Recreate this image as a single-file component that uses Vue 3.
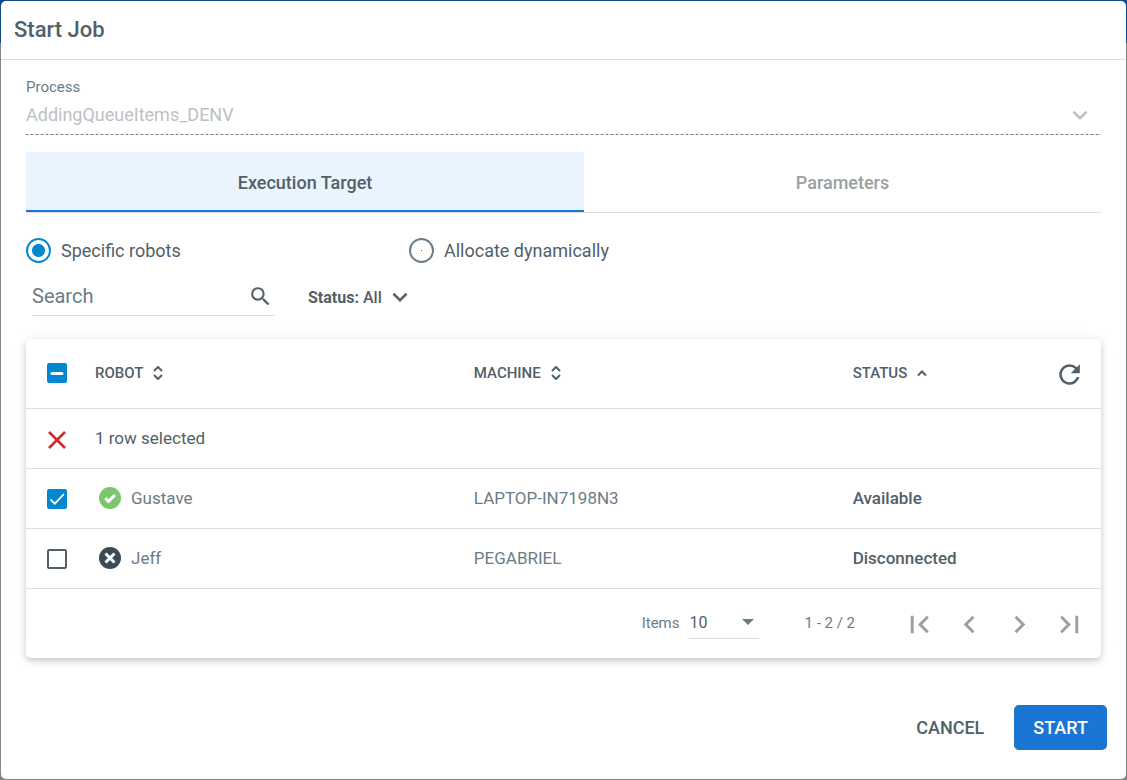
<script setup>
import { ref, computed } from 'vue'

const process = ref('AddingQueueItems_DENV')
const tab = ref('target')
const tabs = [
  { id: 'target', label: 'Execution Target' },
  { id: 'params', label: 'Parameters' },
]
const mode = ref('specific')
const modes = [
  { id: 'specific', label: 'Specific robots' },
  { id: 'dynamic', label: 'Allocate dynamically' },
]
const search = ref('')
const status = ref('All')
const pageSize = ref('10')
const robots = ref([
  { name: 'Gustave', machine: 'LAPTOP-IN7198N3', status: 'Available', selected: true },
  { name: 'Jeff', machine: 'PEGABRIEL', status: 'Disconnected', selected: false },
])
const columns = [
  { label: 'ROBOT', sort: 'none' },
  { label: 'MACHINE', sort: 'none' },
  { label: 'STATUS', sort: 'ascending' },
]
const selectedCount = computed(() => robots.value.filter((r) => r.selected).length)
const allSelected = computed(() => selectedCount.value === robots.value.length)
const someSelected = computed(() => selectedCount.value > 0 && !allSelected.value)
function setAll(value) {
  robots.value.forEach((r) => (r.selected = value))
}
const pagers = [
  { label: 'First page', d: 'M18.41 16.59L13.82 12l4.59-4.59L17 6l-6 6 6 6zM6 6h2v12H6z' },
  { label: 'Previous page', d: 'M15.41 7.41L14 6l-6 6 6 6 1.41-1.41L10.83 12z' },
  { label: 'Next page', d: 'M10 6L8.59 7.41 13.17 12l-4.58 4.59L10 18l6-6z' },
  { label: 'Last page', d: 'M5.59 7.41L10.18 12l-4.59 4.59L7 18l6-6-6-6zM16 6h2v12h-2z' },
]
</script>

<template>
  <div class="backdrop">
    <main class="dialog" role="dialog" aria-labelledby="dialog-title">
      <header class="dialog-header">
        <h1 id="dialog-title">Start Job</h1>
      </header>

      <div class="content">
        <div class="process">
          <label for="process">Process</label>
          <div class="stack process-field">
            <select id="process" v-model="process" disabled>
              <option>AddingQueueItems_DENV</option>
            </select>
            <svg class="chevron" viewBox="0 0 24 24" aria-hidden="true"><path d="M16.59 8.59L12 13.17 7.41 8.59 6 10l6 6 6-6z" /></svg>
          </div>
        </div>

        <div class="tabs" role="tablist">
          <button v-for="t in tabs" :key="t.id" type="button" role="tab" class="tab" :class="{ active: tab === t.id }" :aria-selected="tab === t.id" @click="tab = t.id">{{ t.label }}</button>
        </div>

        <div class="modes">
          <label v-for="m in modes" :key="m.id" class="mode">
            <input v-model="mode" type="radio" name="mode" :value="m.id" />
            <span>{{ m.label }}</span>
          </label>
        </div>

        <div class="filters">
          <div class="search">
            <input v-model="search" type="text" placeholder="Search" aria-label="Search" />
            <svg viewBox="0 0 24 24" aria-hidden="true"><path d="M15.5 14h-.79l-.28-.27A6.47 6.47 0 0 0 16 9.5 6.5 6.5 0 1 0 9.5 16c1.61 0 3.09-.59 4.23-1.57l.27.28v.79l5 4.99L20.49 19zm-6 0a4.5 4.5 0 1 1 0-9 4.5 4.5 0 0 1 0 9z" /></svg>
          </div>
          <div class="status-filter">
            <label for="status">Status:</label>
            <div class="stack">
              <select id="status" v-model="status">
                <option>All</option>
              </select>
              <svg class="chevron" viewBox="0 0 24 24" aria-hidden="true"><path d="M16.59 8.59L12 13.17 7.41 8.59 6 10l6 6 6-6z" /></svg>
            </div>
          </div>
        </div>

        <section class="card">
          <table>
            <colgroup>
              <col class="col-check" />
              <col class="col-data" />
              <col class="col-data" />
              <col />
              <col class="col-action" />
            </colgroup>
            <thead>
              <tr>
                <th>
                  <span class="stack check">
                    <input type="checkbox" aria-label="Select all robots" :checked="allSelected" :indeterminate="someSelected" @change="setAll($event.target.checked)" />
                    <svg v-if="someSelected" viewBox="0 0 20 20" aria-hidden="true"><path d="M5 10.5h10" fill="none" stroke="#fff" stroke-width="3" stroke-linecap="round" /></svg>
                    <svg v-else-if="allSelected" viewBox="0 0 20 20" aria-hidden="true"><path d="M3.5 10.5l4.3 4.2L17 5" fill="none" stroke="#fff" stroke-width="1.8" /></svg>
                  </span>
                </th>
                <th v-for="c in columns" :key="c.label" :aria-sort="c.sort">
                  <button type="button" class="sort">
                    {{ c.label }}
                    <svg viewBox="0 0 10 14" aria-hidden="true">
                      <path v-if="c.sort === 'none'" d="M1 5l4-4 4 4M1 9l4 4 4-4" />
                      <path v-else d="M1 9.5l4-4 4 4" />
                    </svg>
                  </button>
                </th>
                <th class="action">
                  <button type="button" class="refresh" aria-label="Refresh">
                    <svg viewBox="0 0 24 24" aria-hidden="true"><path d="M17.65 6.35A7.96 7.96 0 0 0 12 4a8 8 0 1 0 7.73 10h-2.08A6 6 0 1 1 12 6c1.66 0 3.14.69 4.22 1.78L13 11h7V4z" /></svg>
                  </button>
                </th>
              </tr>
            </thead>
            <tbody>
              <tr>
                <td>
                  <button type="button" class="clear" aria-label="Clear selection" @click="setAll(false)">
                    <svg viewBox="0 0 20 20" aria-hidden="true"><path d="M2 3l16 16M18 3L2 19" fill="none" stroke="#c92a2a" stroke-width="2.6" /></svg>
                  </button>
                </td>
                <td colspan="4" class="selected-info">{{ selectedCount }} row selected</td>
              </tr>
              <tr v-for="r in robots" :key="r.name">
                <td>
                  <span class="stack check">
                    <input v-model="r.selected" type="checkbox" :aria-label="'Select ' + r.name" />
                    <svg v-if="r.selected" viewBox="0 0 20 20" aria-hidden="true"><path d="M3.5 10.5l4.3 4.2L17 5" fill="none" stroke="#fff" stroke-width="1.8" /></svg>
                  </span>
                </td>
                <td>
                  <span class="robot">
                    <svg viewBox="0 0 22 22" aria-hidden="true">
                      <template v-if="r.status === 'Available'">
                        <circle cx="11" cy="11" r="11" fill="#7cc76e" />
                        <path d="M6.3 11.2l3.2 3.1L16 8" fill="none" stroke="#fff" stroke-width="3" />
                      </template>
                      <template v-else>
                        <circle cx="11" cy="11" r="11" fill="#3b4b55" />
                        <path d="M6.5 6.5l9 9M15.5 6.5l-9 9" fill="none" stroke="#fff" stroke-width="3" />
                      </template>
                    </svg>
                    {{ r.name }}
                  </span>
                </td>
                <td>{{ r.machine }}</td>
                <td colspan="2" class="state">{{ r.status }}</td>
              </tr>
            </tbody>
          </table>

          <footer class="pagination">
            <label for="page-size">Items</label>
            <div class="stack page-size">
              <select id="page-size" v-model="pageSize">
                <option>10</option>
              </select>
              <svg viewBox="0 0 12 6" aria-hidden="true"><path d="M0 0h12L6 6z" /></svg>
            </div>
            <span class="range">1 - 2 / 2</span>
            <button v-for="p in pagers" :key="p.label" type="button" class="pager" :aria-label="p.label">
              <svg viewBox="0 0 24 24" aria-hidden="true"><path :d="p.d" /></svg>
            </button>
          </footer>
        </section>
      </div>

      <div class="actions">
        <button type="button" class="btn">CANCEL</button>
        <button type="button" class="btn primary">START</button>
      </div>
    </main>
  </div>
</template>

<style>
body {
  margin: 0;
}
</style>

<style scoped>
.backdrop,
.backdrop * {
  box-sizing: border-box;
}
.backdrop {
  min-height: 100vh;
  padding: 1px;
  display: flex;
  background: linear-gradient(#104a87 43px, #858585 43px);
  font-family: Roboto, "Liberation Sans", sans-serif;
  font-size: 17px;
  color: #526069;
}
button,
input,
select {
  font: inherit;
  color: inherit;
  margin: 0;
  padding: 0;
  border: 0;
  background: none;
  appearance: none;
  outline-offset: 2px;
}
button,
select {
  cursor: pointer;
}
svg {
  display: block;
  fill: currentColor;
}
.stack {
  display: grid;
  align-items: center;
}
.stack > * {
  grid-area: 1 / 1;
}
.stack > svg {
  justify-self: end;
  pointer-events: none;
}
.chevron {
  width: 30px;
  height: 30px;
}
.dialog {
  flex: 1;
  min-width: 0;
  display: flex;
  flex-direction: column;
  background: #fff;
  border-radius: 5px;
}
.dialog-header {
  padding: 14px 13px;
  border-bottom: 1px solid #ddd;
}
h1 {
  margin: 0;
  font-size: 22px;
  line-height: 30px;
  font-weight: 500;
}
.content {
  padding: 17px 25px 0;
}
.process label {
  display: block;
  font-size: 15px;
  line-height: 20px;
  color: #6b7c86;
}
.process-field {
  height: 38px;
  padding: 0 6px 3px 0;
  background: repeating-linear-gradient(90deg, #777 0 2px, #d6d6d6 2px 5px) bottom / 100% 1px no-repeat;
}
.process select {
  height: 35px;
  font-size: 18px;
  color: #bcc1c4;
  opacity: 1;
}
.process .chevron {
  color: #bcc1c4;
}
.tabs {
  display: flex;
  margin-top: 17px;
  border-bottom: 1px solid #ddd;
}
.tab {
  flex: 1 1 auto;
  height: 60px;
  font-size: 18px;
  font-weight: 500;
  color: #9b9fa2;
}
.tab.active {
  color: #526069;
  background: #e9f4fe;
  border-top: 2px solid transparent;
  border-bottom: 2px solid #1976d2;
}
.modes {
  display: grid;
  grid-template-columns: 383px 1fr;
  margin-top: 25px;
}
.mode {
  display: flex;
  align-items: center;
  gap: 10px;
  font-size: 18px;
  line-height: 25px;
}
.mode input {
  width: 25px;
  height: 25px;
  border: 2px solid #6b7c86;
  border-radius: 50%;
  background: linear-gradient(#526069, #526069) center / 1px 1px no-repeat;
}
.mode input:checked {
  border-color: #0288d1;
  background: radial-gradient(circle, #0288d1 6px, transparent 7px);
}
.filters {
  display: flex;
  gap: 33px;
  margin: 15px 6px 0;
}
.search {
  width: 243px;
  height: 38px;
  padding-right: 2px;
  display: flex;
  align-items: center;
  border-bottom: 1px solid #ddd;
}
.search input {
  flex: 1;
  min-width: 0;
  padding-bottom: 2px;
  font-size: 20px;
}
.search input::placeholder {
  color: #6b7c86;
  opacity: 1;
}
.search svg {
  width: 25px;
  height: 25px;
}
.status-filter {
  display: flex;
  align-items: center;
  gap: 4px;
  font-size: 16px;
  font-weight: 500;
}
.status-filter label {
  font-weight: 700;
}
.status-filter select {
  padding-right: 33px;
}
.card {
  margin-top: 23px;
  border-radius: 5px;
  background: #fff;
  box-shadow: 0 3px 6px rgba(0, 0, 0, 0.18), 0 0 16px rgba(0, 0, 0, 0.06);
}
table {
  width: 100%;
  table-layout: fixed;
  border-collapse: separate;
  border-spacing: 0;
}
.col-check {
  width: 69px;
}
.col-data {
  width: 35.24%;
}
.col-action {
  width: 62px;
}
th,
td {
  height: 60px;
  padding: 0 0 2px;
  text-align: left;
  vertical-align: middle;
  color: #6b7c86;
  border-bottom: 1px solid #ddd;
}
th {
  height: 70px;
}
th:first-child {
  padding-left: 21px;
}
td:first-child {
  padding: 0 0 0 21px;
}
th.action {
  padding: 2px 0 0;
}
.selected-info {
  color: #526069;
}
.state {
  color: #526069;
  font-weight: 500;
}
.check {
  width: 20px;
}
.check input {
  width: 20px;
  height: 20px;
  border: 2px solid #526069;
  border-radius: 2px;
}
.check input:checked,
.check input:indeterminate {
  border-color: #0288d1;
  background: #0288d1;
}
.check svg {
  width: 20px;
  height: 20px;
}
.sort {
  display: flex;
  align-items: center;
  gap: 10px;
  font-size: 15px;
  font-weight: 500;
  color: #526069;
}
.sort svg {
  width: 10px;
  height: 14px;
  fill: none;
  stroke: currentColor;
  stroke-width: 2;
}
.refresh {
  display: block;
  margin-left: 15px;
  color: #526069;
}
.refresh svg {
  width: 31px;
  height: 31px;
}
.clear {
  display: block;
}
.clear svg {
  width: 20px;
  height: 20px;
}
.robot {
  display: flex;
  align-items: center;
  gap: 10px;
  padding-left: 4px;
}
.robot svg {
  width: 22px;
  height: 22px;
}
.pagination {
  display: flex;
  justify-content: flex-end;
  align-items: center;
  height: 69px;
  padding: 0 7px 2px 0;
  font-size: 15px;
  color: #6b7c86;
}
.page-size {
  width: 70px;
  height: 32px;
  margin-left: 10px;
  padding-right: 5px;
  border-bottom: 1px solid #ddd;
}
.page-size select {
  font-size: 16px;
  color: #526069;
}
.page-size svg {
  width: 12px;
  height: 6px;
}
.range {
  margin: 0 39px 0 45px;
}
.pager {
  display: grid;
  place-items: center;
  width: 50px;
  height: 50px;
  padding-top: 4px;
  color: #9e9e9e;
}
.pager svg {
  width: 35px;
  height: 35px;
}
.actions {
  display: flex;
  justify-content: flex-end;
  gap: 11px;
  margin-top: auto;
  padding: 46px 19px 29px;
}
.btn {
  height: 45px;
  padding: 0 19px;
  border-radius: 5px;
  font-size: 18px;
  font-weight: 500;
}
.primary {
  color: #fff;
  background: #1976d2;
}
</style>
